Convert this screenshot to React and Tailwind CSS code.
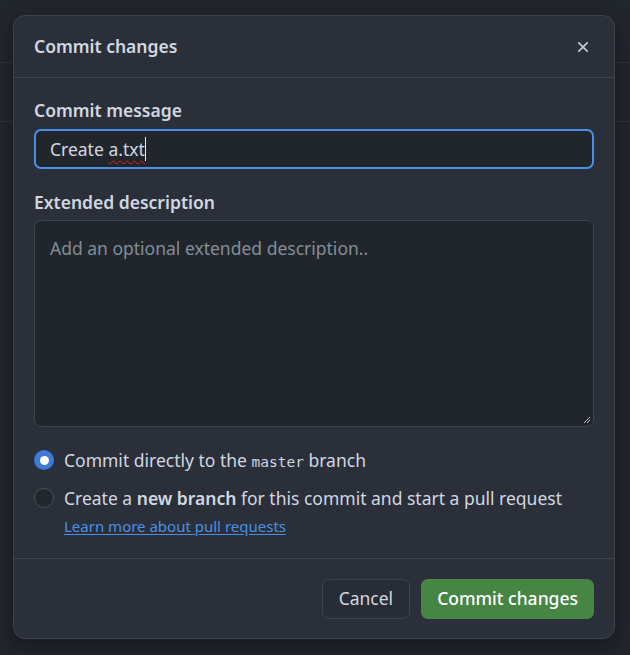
import React from "react";

export default function App() {
  return (
    <div
      className="relative w-[630px] h-[655px] bg-[#22262d] overflow-hidden"
      style={{ fontFamily: '"Noto Sans", sans-serif' }}
    >
      <div className="h-[63px] border-b border-[#30353d]" />
      <div className="h-[59px] border-b border-[#30353d]" />

      <div className="absolute left-[13px] top-[15px] w-[602px] h-[624px] rounded-[12px] border border-[#3d444d] bg-[#2a2f3a] shadow-[0_8px_24px_rgba(0,0,0,0.4)] flex flex-col">
        <div className="h-[62px] shrink-0 border-b border-[#3d444d] flex items-center justify-between pl-[20px] pr-[22px]">
          <h2 className="text-[17.5px] font-semibold text-[#d1d7e0]">Commit changes</h2>
          <svg width="18" height="18" viewBox="0 0 16 16" className="text-[#c3c8cf]" fill="currentColor">
            <path d="M3.72 3.72a.75.75 0 0 1 1.06 0L8 6.94l3.22-3.22a.749.749 0 0 1 1.275.326.749.749 0 0 1-.215.734L9.06 8l3.22 3.22a.749.749 0 0 1-.326 1.275.749.749 0 0 1-.734-.215L8 9.06l-3.22 3.22a.751.751 0 0 1-1.042-.018.751.751 0 0 1-.018-1.042L6.94 8 3.72 4.78a.75.75 0 0 1 0-1.06Z" />
          </svg>
        </div>

        <div className="flex-1 px-[20px] pt-[20px]">
          <div className="text-[17.5px] font-semibold text-[#d1d7e0] leading-[24px]">Commit message</div>
          <div className="mt-[7px] h-[40px] rounded-[7px] border-2 border-[#4a8fe7] bg-[#21262d] flex items-center pl-[14px] text-[17.5px] text-[#d1d7e0]">
            <span>Create&nbsp;</span>
            <span className="underline decoration-wavy decoration-[#e02020] decoration-1 underline-offset-[4px]">a.txt</span>
            <span className="w-px h-[24px] bg-[#e6e9ee]" />
          </div>

          <div className="mt-[21px] text-[17.5px] font-semibold text-[#d1d7e0] leading-[24px]">Extended description</div>
          <div className="relative mt-[6px] h-[207px] rounded-[7px] border border-[#3d444d] bg-[#21262d] px-[15px] pt-[15px] text-[17.5px] leading-[24px] text-[#848d97]">
            Add an optional extended description..
            <svg className="absolute right-[2px] bottom-[2px]" width="8" height="8" viewBox="0 0 8 8">
              <path d="M7 1 L1 7 M7 4 L4 7" stroke="#c0c4ca" strokeWidth="1" />
            </svg>
          </div>

          <div className="mt-[21px] flex items-center gap-[10px] h-[24px]">
            <span className="w-[20px] h-[20px] shrink-0 rounded-full bg-[#3f7ad8] flex items-center justify-center">
              <span className="w-[9px] h-[9px] rounded-full bg-white" />
            </span>
            <span className="text-[17.5px] text-[#d1d7e0] whitespace-nowrap">
              Commit directly to the{" "}
              <span className="text-[14.5px] text-[#d1d7e0]" style={{ fontFamily: '"DejaVu Sans Mono", monospace' }}>master</span>{" "}
              branch
            </span>
          </div>

          <div className="mt-[14px] flex items-center gap-[10px] h-[24px]">
            <span className="w-[20px] h-[20px] shrink-0 rounded-full border border-[#4b525b] bg-[#22262d]" />
            <span className="text-[17.5px] text-[#d1d7e0] whitespace-nowrap">
              Create a <span className="font-semibold">new branch</span> for this commit and start a pull request
            </span>
          </div>
          <div className="pl-[30px] mt-[6px] text-[15px] leading-[20px]">
            <a className="text-[#4a8fe7] underline underline-offset-[2px]">Learn more about pull requests</a>
          </div>
        </div>

        <div className="h-[80px] shrink-0 border-t border-[#3d444d] flex items-center justify-end gap-[11px] px-[20px]">
          <button className="h-[40px] px-[16px] rounded-[7px] border border-[#3d444d] bg-[#272c35] text-[17.5px] text-[#d1d7e0]">
            Cancel
          </button>
          <button className="h-[40px] px-[16px] rounded-[7px] bg-[#468544] text-[17.5px] font-medium text-white">
            Commit changes
          </button>
        </div>
      </div>
    </div>
  );
}
